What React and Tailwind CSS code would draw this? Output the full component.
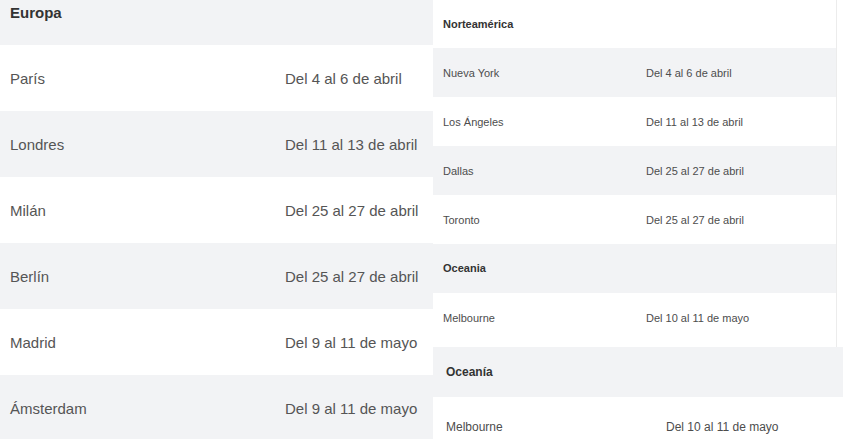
const europa = [
  { city: "París", date: "Del 4 al 6 de abril" },
  { city: "Londres", date: "Del 11 al 13 de abril" },
  { city: "Milán", date: "Del 25 al 27 de abril" },
  { city: "Berlín", date: "Del 25 al 27 de abril" },
  { city: "Madrid", date: "Del 9 al 11 de mayo" },
  { city: "Ámsterdam", date: "Del 9 al 11 de mayo" },
];

const norteamerica = [
  { city: "Nueva York", date: "Del 4 al 6 de abril" },
  { city: "Los Ángeles", date: "Del 11 al 13 de abril" },
  { city: "Dallas", date: "Del 25 al 27 de abril" },
  { city: "Toronto", date: "Del 25 al 27 de abril" },
];

export default function App() {
  return (
    <div className="flex w-[843px] h-[439px] overflow-hidden bg-white font-['Liberation_Sans',Arial,sans-serif]">
      {/* Europa */}
      <div className="w-[433px] shrink-0">
        <div className="h-[45px] bg-[#f2f3f5] pl-[10px] pt-[3px] text-[15px] leading-[20px] font-bold text-[#333]">
          Europa
        </div>
        {europa.map((row, i) => (
          <div
            key={row.city}
            className={`flex items-center h-[66px] pl-[10px] pt-[2px] text-[15px] text-[#555] ${
              i % 2 === 0 ? "bg-white" : "bg-[#f2f3f5]"
            }`}
          >
            <span className="w-[275px] shrink-0">{row.city}</span>
            <span>{row.date}</span>
          </div>
        ))}
      </div>

      {/* Norteamérica + Oceanía */}
      <div className="flex-1 flex flex-col">
        <div className="w-[404px] shrink-0 border-r border-[#ececec] bg-white">
          <div className="flex items-center h-[48px] pl-[10px] text-[11px] font-bold text-[#333]">
            Norteamérica
          </div>
          {norteamerica.map((row, i) => (
            <div
              key={row.city}
              className={`flex items-center h-[49px] pl-[10px] pt-[1px] text-[11px] text-[#4d4d4d] ${
                i % 2 === 0 ? "bg-[#f2f3f5]" : "bg-white"
              }`}
            >
              <span className="w-[203px] shrink-0">{row.city}</span>
              <span>{row.date}</span>
            </div>
          ))}
          <div className="flex items-center h-[49px] pl-[10px] bg-[#f2f3f5] text-[11px] font-bold text-[#333]">
            Oceania
          </div>
          <div className="flex items-start h-[54px] pl-[10px] pt-[17px] text-[11px] text-[#4d4d4d]">
            <span className="w-[203px] shrink-0">Melbourne</span>
            <span>Del 10 al 11 de mayo</span>
          </div>
        </div>
        <div className="flex items-center shrink-0 h-[50px] pl-[13px] bg-[#f2f3f5] text-[12px] font-bold text-[#333]">
          Oceanía
        </div>
        <div className="flex items-start shrink-0 h-[50px] pl-[13px] pt-[21px] text-[12px] text-[#4d4d4d] bg-white">
          <span className="w-[220px] shrink-0">Melbourne</span>
          <span>Del 10 al 11 de mayo</span>
        </div>
      </div>
    </div>
  );
}
